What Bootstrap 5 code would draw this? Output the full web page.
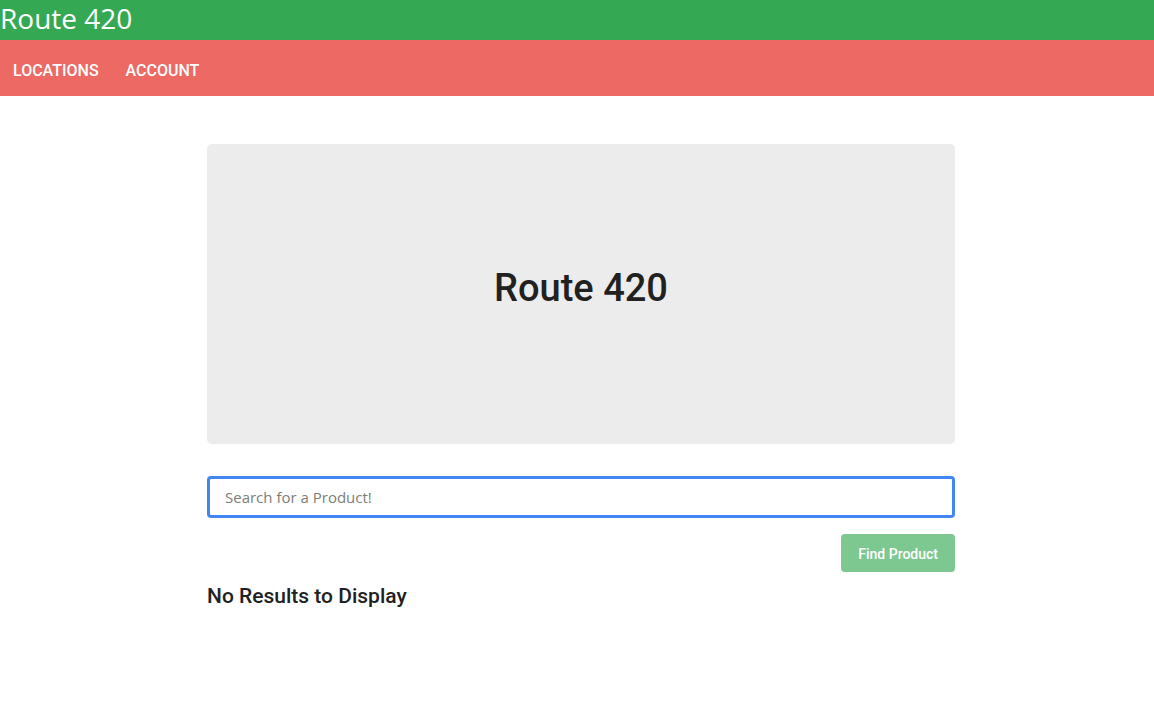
<!DOCTYPE html>
<html lang="en">
<head>
<meta charset="utf-8">
<meta name="viewport" content="width=device-width, initial-scale=1">
<title>Route 420</title>
<link href="https://cdn.jsdelivr.net/npm/bootstrap@5.3.0/dist/css/bootstrap.min.css" rel="stylesheet">
<style>
  body { font-family: "Open Sans", sans-serif; color: #212121; }
  .site-title { background: #34a853; font-size: 28px; line-height: 36px; padding-bottom: 4px; }
  .site-nav { background: #ec6964; padding: 19px 13px 13px; gap: 27px; }
  .head-font { font-family: Roboto, sans-serif; font-weight: 500; }
  .site-nav .nav-link { font-size: 16px; line-height: 24px; }
  .page { max-width: 748px; }
  .hero { background: #ececec; min-height: 300px; border-radius: 5px; padding-bottom: 10px; }
  .hero h1 { font-size: 38px; }
  .search-box { border: 3px solid #4285f4; padding: 6px 15px; font-size: 15px; line-height: 24px; border-radius: 4px; }
  .search-box::placeholder { color: #7a8078; }
  .find-btn, .find-btn:hover { background: #7dc891; }
  .find-btn { padding: 8px 16px 6px; border-radius: 4px; font-size: 14px; line-height: 22px; }
  .results { font-size: 21px; line-height: 32px; }
</style>
</head>
<body>
<header>
  <div class="site-title"><a href="#" class="text-white text-decoration-none">Route 420</a></div>
  <nav class="site-nav d-flex">
    <a class="nav-link head-font text-white" href="#">LOCATIONS</a>
    <a class="nav-link head-font text-white" href="#">ACCOUNT</a>
  </nav>
</header>
<main class="ps-2 pt-5">
  <div class="page mx-auto">
    <section class="hero d-flex align-items-center justify-content-center">
      <h1 class="head-font m-0">Route 420</h1>
    </section>
    <form class="d-flex flex-column mt-4 pt-2">
      <input type="text" class="form-control search-box" aria-label="Search for a product" placeholder="Search for a Product!">
      <button type="button" class="btn find-btn head-font text-white mt-3 align-self-end">Find Product</button>
    </form>
    <h2 class="head-font results mt-2">No Results to Display</h2>
  </div>
</main>
<script src="https://cdn.jsdelivr.net/npm/bootstrap@5.3.0/dist/js/bootstrap.bundle.min.js"></script>
</body>
</html>
